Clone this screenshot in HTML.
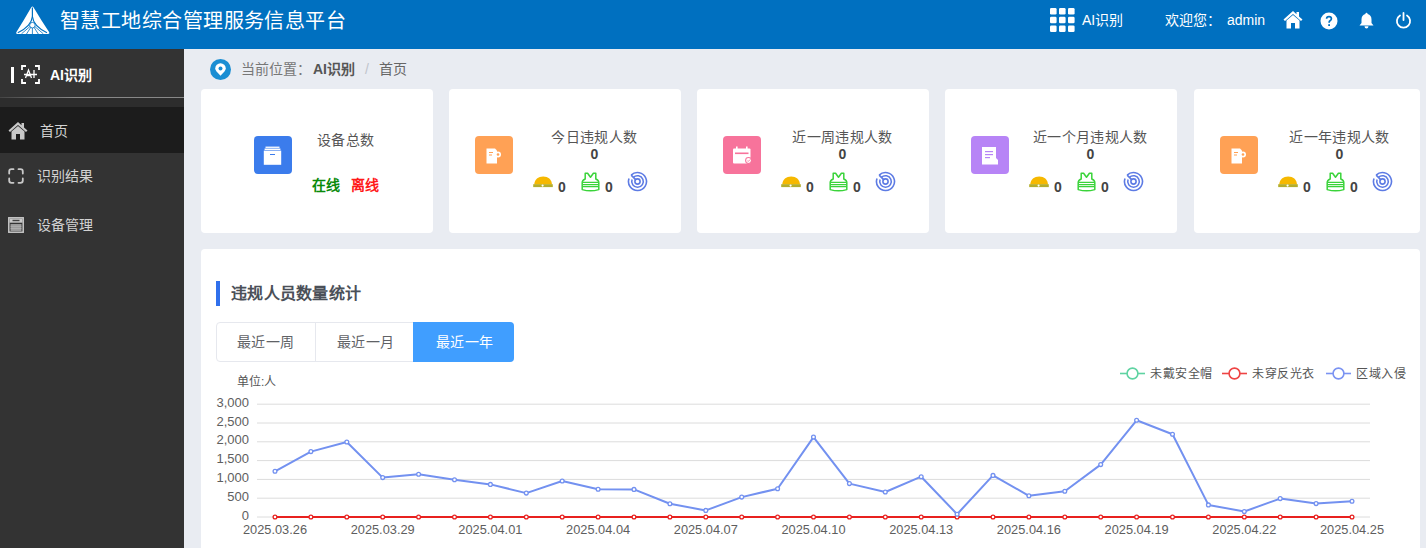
<!DOCTYPE html>
<html lang="zh-CN"><head><meta charset="utf-8">
<style>
*{margin:0;padding:0;box-sizing:border-box}
html,body{width:1426px;height:548px;overflow:hidden}
body{position:relative;background:#e9ecf2;font-family:"Liberation Sans",sans-serif;color:#606266}
.a{position:absolute;white-space:nowrap}
#hdr{left:0;top:0;width:1426px;height:49px;background:#0070c0}
#side{left:0;top:49px;width:184px;height:499px;background:#333333}
.card{position:absolute;top:89px;height:144px;background:#fff;border-radius:4px}
.ib{position:absolute;top:47px;width:38px;height:38px;border-radius:4px}
.ct{position:absolute;top:38px;font-size:14px;line-height:20px;color:#555;letter-spacing:0.3px}
.cz{position:absolute;top:56px;font-size:14px;line-height:16px;font-weight:bold;color:#444}
.cn{position:absolute;top:90px;font-size:14px;line-height:16px;font-weight:bold;color:#444}
</style></head><body>

<!-- header -->
<div id="hdr" class="a"></div>
<svg class="a" style="left:14px;top:4px" width="40" height="34" viewBox="14 4 40 34">
  <path d="M31.3 7.2 Q32.4 5.6 33.5 7.2 Q41 20 49.2 32.2 Q50 34 48 34 L17.5 34 Q15.5 34 16.3 32.2 Q24 20 31.3 7.2 Z" fill="#fff"/>
  <path d="M32.4 7.5 L32.4 16.5 Q31.5 26 17.8 32.8" fill="none" stroke="#0070c0" stroke-width="1.2"/>
  <path d="M32.4 16.5 Q33.3 26 47 32.8" fill="none" stroke="#0070c0" stroke-width="1.2"/>
  <circle cx="32.4" cy="25.2" r="2.8" fill="#fff" stroke="#0070c0" stroke-width="0.9"/>
  <path d="M32.4 28 L32.4 34 M30.6 27.6 L26.5 34 M34.2 27.6 L38.3 34 M29.9 26.6 L21.5 33.8 M34.9 26.6 L43.3 33.8" stroke="#0070c0" stroke-width="0.8"/>
</svg>
<div class="a" style="left:60px;top:8px;font-size:20px;line-height:26px;color:#fff;letter-spacing:0.45px;font-weight:500">智慧工地综合管理服务信息平台</div>

<svg class="a" style="left:1050px;top:8px" width="25" height="24" viewBox="0 0 25 24">
  <g fill="#fff">
  <rect x="0" y="0" width="6.6" height="6.6" rx="1.3"/><rect x="9" y="0" width="6.6" height="6.6" rx="1.3"/><rect x="18" y="0" width="6.6" height="6.6" rx="1.3"/>
  <rect x="0" y="8.7" width="6.6" height="6.6" rx="1.3"/><rect x="9" y="8.7" width="6.6" height="6.6" rx="1.3"/><rect x="18" y="8.7" width="6.6" height="6.6" rx="1.3"/>
  <rect x="0" y="17.4" width="6.6" height="6.6" rx="1.3"/><rect x="9" y="17.4" width="6.6" height="6.6" rx="1.3"/><rect x="18" y="17.4" width="6.6" height="6.6" rx="1.3"/>
  </g>
</svg>
<div class="a" style="left:1082px;top:11px;font-size:14px;line-height:18px;color:#fff">AI识别</div>
<div class="a" style="left:1165px;top:11px;font-size:14px;line-height:18px;color:#fff">欢迎您：</div>
<div class="a" style="left:1227px;top:11px;font-size:14px;line-height:18px;color:#fff">admin</div>
<!-- home -->
<svg class="a" style="left:1283px;top:10px" width="20" height="19" viewBox="0 0 20 19">
  <path d="M10 1 L0.5 9.5 L2 11 L10 4 L18 11 L19.5 9.5 L16 6.4 L16 2 L13.5 2 L13.5 4.2 Z" fill="#fff"/>
  <path d="M3.5 10.5 L10 5 L16.5 10.5 L16.5 18.5 L12 18.5 L12 13 L8 13 L8 18.5 L3.5 18.5 Z" fill="#fff"/>
</svg>
<!-- question -->
<svg class="a" style="left:1320px;top:12px" width="18" height="18" viewBox="0 0 18 18">
  <circle cx="9" cy="9" r="8.5" fill="#fff"/>
  <path d="M6.6 6.8 Q6.6 4.6 9 4.6 Q11.4 4.6 11.4 6.7 Q11.4 8 10 8.8 Q9.1 9.4 9.1 10.8" fill="none" stroke="#0070c0" stroke-width="1.7"/>
  <rect x="8.2" y="12.2" width="1.8" height="1.8" fill="#0070c0"/>
</svg>
<!-- bell -->
<svg class="a" style="left:1359px;top:12px" width="15" height="17" viewBox="0 0 15 17">
  <path d="M7.5 0.8 Q8.6 0.8 8.6 2 Q12.5 3 12.5 7.5 L12.5 11 L14.5 13.5 L0.5 13.5 L2.5 11 L2.5 7.5 Q2.5 3 6.4 2 Q6.4 0.8 7.5 0.8 Z" fill="#fff"/>
  <path d="M5.5 14.3 L9.5 14.3 Q9.3 16.5 7.5 16.5 Q5.7 16.5 5.5 14.3 Z" fill="#fff"/>
</svg>
<!-- power -->
<svg class="a" style="left:1395px;top:12px" width="17" height="17" viewBox="0 0 17 17">
  <path d="M5 3.5 A6.6 6.6 0 1 0 12 3.5" fill="none" stroke="#fff" stroke-width="1.8" stroke-linecap="round"/>
  <path d="M8.5 1 L8.5 8" stroke="#fff" stroke-width="1.8" stroke-linecap="round"/>
</svg>

<!-- sidebar -->
<div id="side" class="a"></div>
<div class="a" style="left:0;top:97px;width:184px;height:1px;background:linear-gradient(90deg,#444,#888 40%,#888)"></div>
<div class="a" style="left:0;top:98px;width:184px;height:9px;background:#2d2d2d"></div>
<div class="a" style="left:11px;top:67px;width:3px;height:16px;background:#fff"></div>
<svg class="a" style="left:21px;top:65px" width="19" height="19" viewBox="0 0 19 19">
  <path d="M1 5 L1 1 L5 1 M14 1 L18 1 L18 5 M18 14 L18 18 L14 18 M5 18 L1 18 L1 14" fill="none" stroke="#fff" stroke-width="1.8"/>
  <path d="M4.5 13 L7.5 5 L10.5 13 M5.6 10.5 L9.4 10.5 M13 5 L13 13 M3 9.5 L16 9.5" fill="none" stroke="#fff" stroke-width="1.3"/>
</svg>
<div class="a" style="left:50px;top:66px;font-size:14px;line-height:18px;color:#fff;font-weight:bold">AI识别</div>

<div class="a" style="left:0;top:107px;width:184px;height:46px;background:#1c1c1c"></div>
<svg class="a" style="left:8px;top:121px" width="20" height="19" viewBox="0 0 20 19">
  <path d="M10 1 L0.5 9.5 L2 11 L10 4 L18 11 L19.5 9.5 L16 6.4 L16 2 L13.5 2 L13.5 4.2 Z" fill="#c8c8c8"/>
  <path d="M3.5 10.5 L10 5 L16.5 10.5 L16.5 18.5 L12 18.5 L12 13 L8 13 L8 18.5 L3.5 18.5 Z" fill="#c8c8c8"/>
</svg>
<div class="a" style="left:40px;top:122px;font-size:14px;line-height:18px;color:#d2d2d2">首页</div>

<svg class="a" style="left:8px;top:168px" width="16" height="16" viewBox="0 0 16 16">
  <path d="M1.2 5.5 L1.2 3.5 Q1.2 1.2 3.5 1.2 L5.5 1.2 M10.5 1.2 L12.5 1.2 Q14.8 1.2 14.8 3.5 L14.8 5.5 M14.8 10.5 L14.8 12.5 Q14.8 14.8 12.5 14.8 L10.5 14.8 M5.5 14.8 L3.5 14.8 Q1.2 14.8 1.2 12.5 L1.2 10.5" fill="none" stroke="#c8c8c8" stroke-width="1.8" stroke-linecap="round"/>
</svg>
<div class="a" style="left:37px;top:167px;font-size:14px;line-height:18px;color:#d2d2d2">识别结果</div>

<svg class="a" style="left:8px;top:217px" width="16" height="16" viewBox="0 0 16 16">
  <rect x="0.8" y="0.8" width="14.4" height="14.4" fill="none" stroke="#c8c8c8" stroke-width="1.5"/>
  <rect x="1.5" y="1.5" width="13" height="4.2" fill="#c8c8c8"/>
  <rect x="4.5" y="2.8" width="7" height="1.4" fill="#444"/>
  <rect x="2.5" y="7" width="11" height="7" fill="#9a9a9a"/>
  <path d="M2.5 9.3 L13.5 9.3 M2.5 11.6 L13.5 11.6" stroke="#b8b8b8" stroke-width="0.7"/>
</svg>
<div class="a" style="left:37px;top:216px;font-size:14px;line-height:18px;color:#d2d2d2">设备管理</div>

<!-- breadcrumb -->
<svg class="a" style="left:210px;top:59px" width="21" height="21" viewBox="0 0 21 21">
  <circle cx="10.5" cy="10.5" r="10.5" fill="#1a8ed3"/>
  <path d="M10.5 16.8 Q5.2 11.8 5.2 9.6 A5.3 5.3 0 0 1 15.8 9.6 Q15.8 11.8 10.5 16.8 Z" fill="#fff"/>
  <circle cx="10.5" cy="9.4" r="2" fill="#1a8ed3"/>
</svg>
<div class="a" style="left:241px;top:60px;font-size:14px;line-height:18px;color:#777">当前位置：</div>
<div class="a" style="left:313px;top:60px;font-size:14px;line-height:18px;color:#555;font-weight:bold">AI识别</div>
<div class="a" style="left:365px;top:60px;font-size:14px;line-height:18px;color:#c0c4cc">/</div>
<div class="a" style="left:379px;top:60px;font-size:14px;line-height:18px;color:#666">首页</div>


<!-- cards -->
<div class="card" style="left:201px;width:232px"></div>
<div class="card" style="left:449px;width:232px"></div>
<div class="card" style="left:697px;width:232px"></div>
<div class="card" style="left:945px;width:232px"></div>
<div class="card" style="left:1194px;width:226px"></div>
<div class="ib" style="left:254px;top:136px;background:#3b7cec"></div>
<svg class="a" style="left:263px;top:145px" width="20" height="21" viewBox="0 0 20 21">
<rect x="2.5" y="1.6" width="14" height="1.3" fill="#fff"/>
<rect x="1.6" y="3.5" width="15.8" height="1.5" fill="#fff"/>
<rect x="0.8" y="5.6" width="17.4" height="14.2" fill="#fff"/>
<rect x="7" y="9" width="5" height="1" fill="#3b7cec"/>
</svg>
<div class="ct" style="left:317px;top:130px">设备总数</div>
<div class="a" style="left:312px;top:176px;font-size:14px;line-height:18px;font-weight:bold;color:#0a8a0a">在线</div>
<div class="a" style="left:351px;top:176px;font-size:14px;line-height:18px;font-weight:bold;color:#ff1a1a">离线</div>
<div class="ib" style="left:475px;top:136px;background:#ffa155"></div>
<svg class="a" style="left:475px;top:136px" width="38" height="38" viewBox="0 0 38 38">
<path d="M11.5 12.5 L20 12.5 L22 14.5 L22 27.5 L11.5 27.5 Z" fill="#fff"/>
<circle cx="23" cy="18.5" r="3" fill="#fff"/><circle cx="23" cy="18.5" r="1.3" fill="#ffa155"/>
<rect x="14" y="16" width="4" height="1" fill="#ffa155"/><rect x="14" y="18.5" width="3" height="1" fill="#ffa155"/>
</svg>
<div class="ct" style="left:534.4px;width:120px;text-align:center;top:127px">今日违规人数</div>
<div class="cz" style="left:574.4px;width:40px;text-align:center;top:146px">0</div>
<svg class="a" style="left:533px;top:176px" width="21" height="13" viewBox="0 0 21 13">
<path d="M1.2 8.6 C1.6 3.2 5.2 0.6 10.2 0.5 C15.2 0.6 18.6 3.2 19 8.6 Z" fill="#f6b800"/>
<rect x="0.2" y="8.2" width="19.6" height="2.9" fill="#b4ae2c"/>
<circle cx="9.6" cy="9.6" r="1.1" fill="#fff"/>
</svg>
<div class="cn" style="left:558px;top:179px">0</div>
<svg class="a" style="left:581px;top:172px" width="19" height="20" viewBox="0 0 19 20">
<path d="M4.2 1.2 L6.6 1.2 L9.5 5.2 L12.4 1.2 L14.8 1.2 L14.8 7 Q17.8 8.2 17.8 10.5 L17.8 17.6 Q9.5 20 1.2 17.6 L1.2 10.5 Q1.2 8.2 4.2 7 Z" fill="none" stroke="#3ad33a" stroke-width="1.5" stroke-linejoin="round"/>
<path d="M1.5 10.4 L17.5 10.4 M1.5 12.6 L17.5 12.6 M1.5 14.6 L17.5 14.6" stroke="#3ad33a" stroke-width="1.2"/>
</svg>
<div class="cn" style="left:605px;top:179px">0</div>
<svg class="a" style="left:627px;top:171px" width="21" height="21" viewBox="0 0 21 21">
<g fill="none" stroke="#5d7be4" stroke-width="1.6">
<path d="M4.14 4.14 A9 9 0 1 1 2.04 7.42"/>
<path d="M6.4 6.4 A5.8 5.8 0 1 1 5.05 8.52"/>
<circle cx="10.5" cy="10.5" r="2.6"/>
<path d="M4.14 4.14 L8.6 8.6"/>
</g></svg>
<div class="ib" style="left:723px;top:136px;background:#f7739b"></div>
<svg class="a" style="left:723px;top:136px" width="38" height="38" viewBox="0 0 38 38">
<rect x="10" y="12.5" width="17.5" height="15" rx="1" fill="#fff"/>
<rect x="13" y="10.5" width="1.6" height="3" fill="#fff"/><rect x="23" y="10.5" width="1.6" height="3" fill="#fff"/>
<rect x="12" y="16.5" width="13.5" height="1.6" fill="#f7739b"/>
<circle cx="25.5" cy="24.5" r="3.4" fill="#f7739b"/><circle cx="25.5" cy="24.5" r="2.4" fill="#fff"/>
<path d="M24.2 24.5 L25.2 25.5 L27 23.6" stroke="#f7739b" stroke-width="0.9" fill="none"/>
</svg>
<div class="ct" style="left:782.4px;width:120px;text-align:center;top:127px">近一周违规人数</div>
<div class="cz" style="left:822.4px;width:40px;text-align:center;top:146px">0</div>
<svg class="a" style="left:781px;top:176px" width="21" height="13" viewBox="0 0 21 13">
<path d="M1.2 8.6 C1.6 3.2 5.2 0.6 10.2 0.5 C15.2 0.6 18.6 3.2 19 8.6 Z" fill="#f6b800"/>
<rect x="0.2" y="8.2" width="19.6" height="2.9" fill="#b4ae2c"/>
<circle cx="9.6" cy="9.6" r="1.1" fill="#fff"/>
</svg>
<div class="cn" style="left:806px;top:179px">0</div>
<svg class="a" style="left:829px;top:172px" width="19" height="20" viewBox="0 0 19 20">
<path d="M4.2 1.2 L6.6 1.2 L9.5 5.2 L12.4 1.2 L14.8 1.2 L14.8 7 Q17.8 8.2 17.8 10.5 L17.8 17.6 Q9.5 20 1.2 17.6 L1.2 10.5 Q1.2 8.2 4.2 7 Z" fill="none" stroke="#3ad33a" stroke-width="1.5" stroke-linejoin="round"/>
<path d="M1.5 10.4 L17.5 10.4 M1.5 12.6 L17.5 12.6 M1.5 14.6 L17.5 14.6" stroke="#3ad33a" stroke-width="1.2"/>
</svg>
<div class="cn" style="left:853px;top:179px">0</div>
<svg class="a" style="left:875px;top:171px" width="21" height="21" viewBox="0 0 21 21">
<g fill="none" stroke="#5d7be4" stroke-width="1.6">
<path d="M4.14 4.14 A9 9 0 1 1 2.04 7.42"/>
<path d="M6.4 6.4 A5.8 5.8 0 1 1 5.05 8.52"/>
<circle cx="10.5" cy="10.5" r="2.6"/>
<path d="M4.14 4.14 L8.6 8.6"/>
</g></svg>
<div class="ib" style="left:971px;top:136px;background:#b784f6"></div>
<svg class="a" style="left:971px;top:136px" width="38" height="38" viewBox="0 0 38 38">
<path d="M11 11 L25 11 L25 22 L27 24 L27 28.5 L11 28.5 Z" fill="#fff"/>
<rect x="14" y="15" width="8" height="1.2" fill="#b784f6"/><rect x="14" y="18" width="8" height="1.2" fill="#b784f6"/><rect x="14" y="21" width="5" height="1.2" fill="#b784f6"/>
</svg>
<div class="ct" style="left:1030.4px;width:120px;text-align:center;top:127px">近一个月违规人数</div>
<div class="cz" style="left:1070.4px;width:40px;text-align:center;top:146px">0</div>
<svg class="a" style="left:1029px;top:176px" width="21" height="13" viewBox="0 0 21 13">
<path d="M1.2 8.6 C1.6 3.2 5.2 0.6 10.2 0.5 C15.2 0.6 18.6 3.2 19 8.6 Z" fill="#f6b800"/>
<rect x="0.2" y="8.2" width="19.6" height="2.9" fill="#b4ae2c"/>
<circle cx="9.6" cy="9.6" r="1.1" fill="#fff"/>
</svg>
<div class="cn" style="left:1054px;top:179px">0</div>
<svg class="a" style="left:1077px;top:172px" width="19" height="20" viewBox="0 0 19 20">
<path d="M4.2 1.2 L6.6 1.2 L9.5 5.2 L12.4 1.2 L14.8 1.2 L14.8 7 Q17.8 8.2 17.8 10.5 L17.8 17.6 Q9.5 20 1.2 17.6 L1.2 10.5 Q1.2 8.2 4.2 7 Z" fill="none" stroke="#3ad33a" stroke-width="1.5" stroke-linejoin="round"/>
<path d="M1.5 10.4 L17.5 10.4 M1.5 12.6 L17.5 12.6 M1.5 14.6 L17.5 14.6" stroke="#3ad33a" stroke-width="1.2"/>
</svg>
<div class="cn" style="left:1101px;top:179px">0</div>
<svg class="a" style="left:1123px;top:171px" width="21" height="21" viewBox="0 0 21 21">
<g fill="none" stroke="#5d7be4" stroke-width="1.6">
<path d="M4.14 4.14 A9 9 0 1 1 2.04 7.42"/>
<path d="M6.4 6.4 A5.8 5.8 0 1 1 5.05 8.52"/>
<circle cx="10.5" cy="10.5" r="2.6"/>
<path d="M4.14 4.14 L8.6 8.6"/>
</g></svg>
<div class="ib" style="left:1220px;top:136px;background:#ffa155"></div>
<svg class="a" style="left:1220px;top:136px" width="38" height="38" viewBox="0 0 38 38">
<path d="M11.5 12.5 L20 12.5 L22 14.5 L22 27.5 L11.5 27.5 Z" fill="#fff"/>
<circle cx="23" cy="18.5" r="3" fill="#fff"/><circle cx="23" cy="18.5" r="1.3" fill="#ffa155"/>
<rect x="14" y="16" width="4" height="1" fill="#ffa155"/><rect x="14" y="18.5" width="3" height="1" fill="#ffa155"/>
</svg>
<div class="ct" style="left:1279.4px;width:120px;text-align:center;top:127px">近一年违规人数</div>
<div class="cz" style="left:1319.4px;width:40px;text-align:center;top:146px">0</div>
<svg class="a" style="left:1278px;top:176px" width="21" height="13" viewBox="0 0 21 13">
<path d="M1.2 8.6 C1.6 3.2 5.2 0.6 10.2 0.5 C15.2 0.6 18.6 3.2 19 8.6 Z" fill="#f6b800"/>
<rect x="0.2" y="8.2" width="19.6" height="2.9" fill="#b4ae2c"/>
<circle cx="9.6" cy="9.6" r="1.1" fill="#fff"/>
</svg>
<div class="cn" style="left:1303px;top:179px">0</div>
<svg class="a" style="left:1326px;top:172px" width="19" height="20" viewBox="0 0 19 20">
<path d="M4.2 1.2 L6.6 1.2 L9.5 5.2 L12.4 1.2 L14.8 1.2 L14.8 7 Q17.8 8.2 17.8 10.5 L17.8 17.6 Q9.5 20 1.2 17.6 L1.2 10.5 Q1.2 8.2 4.2 7 Z" fill="none" stroke="#3ad33a" stroke-width="1.5" stroke-linejoin="round"/>
<path d="M1.5 10.4 L17.5 10.4 M1.5 12.6 L17.5 12.6 M1.5 14.6 L17.5 14.6" stroke="#3ad33a" stroke-width="1.2"/>
</svg>
<div class="cn" style="left:1350px;top:179px">0</div>
<svg class="a" style="left:1372px;top:171px" width="21" height="21" viewBox="0 0 21 21">
<g fill="none" stroke="#5d7be4" stroke-width="1.6">
<path d="M4.14 4.14 A9 9 0 1 1 2.04 7.42"/>
<path d="M6.4 6.4 A5.8 5.8 0 1 1 5.05 8.52"/>
<circle cx="10.5" cy="10.5" r="2.6"/>
<path d="M4.14 4.14 L8.6 8.6"/>
</g></svg>
<!-- chart panel -->
<div class="a" style="left:201px;top:249px;width:1219px;height:299px;background:#fff;border-radius:4px 4px 0 0"></div>
<div class="a" style="left:216px;top:281px;width:4px;height:25px;background:#3070ec"></div>
<div class="a" style="left:231px;top:283px;font-size:16px;line-height:22px;font-weight:bold;color:#4b5058;letter-spacing:0.3px">违规人员数量统计</div>
<div class="a" style="left:216px;top:322px;width:298px;height:40px;border:1px solid #e6e8ee;border-radius:4px"></div>
<div class="a" style="left:315px;top:323px;width:1px;height:38px;background:#e6e8ee"></div>
<div class="a" style="left:413px;top:322px;width:101px;height:40px;background:#409eff;border-radius:0 4px 4px 0"></div>
<div class="a" style="left:237px;top:332px;font-size:14px;line-height:20px;color:#606266;letter-spacing:0.4px">最近一周</div>
<div class="a" style="left:337px;top:332px;font-size:14px;line-height:20px;color:#606266;letter-spacing:0.4px">最近一月</div>
<div class="a" style="left:436px;top:332px;font-size:14px;line-height:20px;color:#fff;letter-spacing:0.4px">最近一年</div>
<div class="a" style="left:237px;top:374px;font-size:12px;line-height:16px;color:#555">单位:人</div>
<svg class="a" style="left:0;top:0" width="1426" height="548" viewBox="0 0 1426 548">
<line x1="257" y1="517.0" x2="1370" y2="517.0" stroke="#dcdcdc" stroke-width="1"/>
<line x1="257" y1="498.2" x2="1370" y2="498.2" stroke="#dcdcdc" stroke-width="1"/>
<line x1="257" y1="479.4" x2="1370" y2="479.4" stroke="#dcdcdc" stroke-width="1"/>
<line x1="257" y1="460.6" x2="1370" y2="460.6" stroke="#dcdcdc" stroke-width="1"/>
<line x1="257" y1="441.8" x2="1370" y2="441.8" stroke="#dcdcdc" stroke-width="1"/>
<line x1="257" y1="423.0" x2="1370" y2="423.0" stroke="#dcdcdc" stroke-width="1"/>
<line x1="257" y1="404.2" x2="1370" y2="404.2" stroke="#dcdcdc" stroke-width="1"/>
<text x="249" y="519.6" text-anchor="end" font-size="13" fill="#5e5e5e" font-family="Liberation Sans">0</text>
<text x="249" y="500.8" text-anchor="end" font-size="13" fill="#5e5e5e" font-family="Liberation Sans">500</text>
<text x="249" y="482.0" text-anchor="end" font-size="13" fill="#5e5e5e" font-family="Liberation Sans">1,000</text>
<text x="249" y="463.2" text-anchor="end" font-size="13" fill="#5e5e5e" font-family="Liberation Sans">1,500</text>
<text x="249" y="444.4" text-anchor="end" font-size="13" fill="#5e5e5e" font-family="Liberation Sans">2,000</text>
<text x="249" y="425.6" text-anchor="end" font-size="13" fill="#5e5e5e" font-family="Liberation Sans">2,500</text>
<text x="249" y="406.8" text-anchor="end" font-size="13" fill="#5e5e5e" font-family="Liberation Sans">3,000</text>
<text x="275.0" y="534" text-anchor="middle" font-size="12.8" fill="#5e5e5e" font-family="Liberation Sans">2025.03.26</text>
<text x="382.7" y="534" text-anchor="middle" font-size="12.8" fill="#5e5e5e" font-family="Liberation Sans">2025.03.29</text>
<text x="490.4" y="534" text-anchor="middle" font-size="12.8" fill="#5e5e5e" font-family="Liberation Sans">2025.04.01</text>
<text x="598.1" y="534" text-anchor="middle" font-size="12.8" fill="#5e5e5e" font-family="Liberation Sans">2025.04.04</text>
<text x="705.8" y="534" text-anchor="middle" font-size="12.8" fill="#5e5e5e" font-family="Liberation Sans">2025.04.07</text>
<text x="813.5" y="534" text-anchor="middle" font-size="12.8" fill="#5e5e5e" font-family="Liberation Sans">2025.04.10</text>
<text x="921.2" y="534" text-anchor="middle" font-size="12.8" fill="#5e5e5e" font-family="Liberation Sans">2025.04.13</text>
<text x="1028.9" y="534" text-anchor="middle" font-size="12.8" fill="#5e5e5e" font-family="Liberation Sans">2025.04.16</text>
<text x="1136.6" y="534" text-anchor="middle" font-size="12.8" fill="#5e5e5e" font-family="Liberation Sans">2025.04.19</text>
<text x="1244.3" y="534" text-anchor="middle" font-size="12.8" fill="#5e5e5e" font-family="Liberation Sans">2025.04.22</text>
<text x="1352.0" y="534" text-anchor="middle" font-size="12.8" fill="#5e5e5e" font-family="Liberation Sans">2025.04.25</text>
<polyline points="275.0,471.3 310.9,451.6 346.8,442.0 382.7,477.6 418.6,474.3 454.5,479.8 490.4,484.4 526.3,493.1 562.2,481.0 598.1,489.2 634.0,489.4 669.9,503.8 705.8,510.4 741.7,497.1 777.6,488.7 813.5,437.1 849.4,483.6 885.3,492.0 921.2,476.7 957.1,514.2 993.0,475.4 1028.9,495.8 1064.8,491.3 1100.7,464.6 1136.6,420.3 1172.5,434.3 1208.4,504.9 1244.3,511.5 1280.2,498.6 1316.1,503.6 1352.0,501.3" fill="none" stroke="#7391f0" stroke-width="2" stroke-linejoin="round"/>
<line x1="275.0" y1="517" x2="1352.0" y2="517" stroke="#e8211f" stroke-width="2"/>
<circle cx="275.0" cy="517" r="1.9" fill="#fff" stroke="#e8211f" stroke-width="1.3"/>
<circle cx="310.9" cy="517" r="1.9" fill="#fff" stroke="#e8211f" stroke-width="1.3"/>
<circle cx="346.8" cy="517" r="1.9" fill="#fff" stroke="#e8211f" stroke-width="1.3"/>
<circle cx="382.7" cy="517" r="1.9" fill="#fff" stroke="#e8211f" stroke-width="1.3"/>
<circle cx="418.6" cy="517" r="1.9" fill="#fff" stroke="#e8211f" stroke-width="1.3"/>
<circle cx="454.5" cy="517" r="1.9" fill="#fff" stroke="#e8211f" stroke-width="1.3"/>
<circle cx="490.4" cy="517" r="1.9" fill="#fff" stroke="#e8211f" stroke-width="1.3"/>
<circle cx="526.3" cy="517" r="1.9" fill="#fff" stroke="#e8211f" stroke-width="1.3"/>
<circle cx="562.2" cy="517" r="1.9" fill="#fff" stroke="#e8211f" stroke-width="1.3"/>
<circle cx="598.1" cy="517" r="1.9" fill="#fff" stroke="#e8211f" stroke-width="1.3"/>
<circle cx="634.0" cy="517" r="1.9" fill="#fff" stroke="#e8211f" stroke-width="1.3"/>
<circle cx="669.9" cy="517" r="1.9" fill="#fff" stroke="#e8211f" stroke-width="1.3"/>
<circle cx="705.8" cy="517" r="1.9" fill="#fff" stroke="#e8211f" stroke-width="1.3"/>
<circle cx="741.7" cy="517" r="1.9" fill="#fff" stroke="#e8211f" stroke-width="1.3"/>
<circle cx="777.6" cy="517" r="1.9" fill="#fff" stroke="#e8211f" stroke-width="1.3"/>
<circle cx="813.5" cy="517" r="1.9" fill="#fff" stroke="#e8211f" stroke-width="1.3"/>
<circle cx="849.4" cy="517" r="1.9" fill="#fff" stroke="#e8211f" stroke-width="1.3"/>
<circle cx="885.3" cy="517" r="1.9" fill="#fff" stroke="#e8211f" stroke-width="1.3"/>
<circle cx="921.2" cy="517" r="1.9" fill="#fff" stroke="#e8211f" stroke-width="1.3"/>
<circle cx="957.1" cy="517" r="1.9" fill="#fff" stroke="#e8211f" stroke-width="1.3"/>
<circle cx="993.0" cy="517" r="1.9" fill="#fff" stroke="#e8211f" stroke-width="1.3"/>
<circle cx="1028.9" cy="517" r="1.9" fill="#fff" stroke="#e8211f" stroke-width="1.3"/>
<circle cx="1064.8" cy="517" r="1.9" fill="#fff" stroke="#e8211f" stroke-width="1.3"/>
<circle cx="1100.7" cy="517" r="1.9" fill="#fff" stroke="#e8211f" stroke-width="1.3"/>
<circle cx="1136.6" cy="517" r="1.9" fill="#fff" stroke="#e8211f" stroke-width="1.3"/>
<circle cx="1172.5" cy="517" r="1.9" fill="#fff" stroke="#e8211f" stroke-width="1.3"/>
<circle cx="1208.4" cy="517" r="1.9" fill="#fff" stroke="#e8211f" stroke-width="1.3"/>
<circle cx="1244.3" cy="517" r="1.9" fill="#fff" stroke="#e8211f" stroke-width="1.3"/>
<circle cx="1280.2" cy="517" r="1.9" fill="#fff" stroke="#e8211f" stroke-width="1.3"/>
<circle cx="1316.1" cy="517" r="1.9" fill="#fff" stroke="#e8211f" stroke-width="1.3"/>
<circle cx="1352.0" cy="517" r="1.9" fill="#fff" stroke="#e8211f" stroke-width="1.3"/>
<circle cx="275.0" cy="471.3" r="1.9" fill="#fff" stroke="#7391f0" stroke-width="1.3"/>
<circle cx="310.9" cy="451.6" r="1.9" fill="#fff" stroke="#7391f0" stroke-width="1.3"/>
<circle cx="346.8" cy="442.0" r="1.9" fill="#fff" stroke="#7391f0" stroke-width="1.3"/>
<circle cx="382.7" cy="477.6" r="1.9" fill="#fff" stroke="#7391f0" stroke-width="1.3"/>
<circle cx="418.6" cy="474.3" r="1.9" fill="#fff" stroke="#7391f0" stroke-width="1.3"/>
<circle cx="454.5" cy="479.8" r="1.9" fill="#fff" stroke="#7391f0" stroke-width="1.3"/>
<circle cx="490.4" cy="484.4" r="1.9" fill="#fff" stroke="#7391f0" stroke-width="1.3"/>
<circle cx="526.3" cy="493.1" r="1.9" fill="#fff" stroke="#7391f0" stroke-width="1.3"/>
<circle cx="562.2" cy="481.0" r="1.9" fill="#fff" stroke="#7391f0" stroke-width="1.3"/>
<circle cx="598.1" cy="489.2" r="1.9" fill="#fff" stroke="#7391f0" stroke-width="1.3"/>
<circle cx="634.0" cy="489.4" r="1.9" fill="#fff" stroke="#7391f0" stroke-width="1.3"/>
<circle cx="669.9" cy="503.8" r="1.9" fill="#fff" stroke="#7391f0" stroke-width="1.3"/>
<circle cx="705.8" cy="510.4" r="1.9" fill="#fff" stroke="#7391f0" stroke-width="1.3"/>
<circle cx="741.7" cy="497.1" r="1.9" fill="#fff" stroke="#7391f0" stroke-width="1.3"/>
<circle cx="777.6" cy="488.7" r="1.9" fill="#fff" stroke="#7391f0" stroke-width="1.3"/>
<circle cx="813.5" cy="437.1" r="1.9" fill="#fff" stroke="#7391f0" stroke-width="1.3"/>
<circle cx="849.4" cy="483.6" r="1.9" fill="#fff" stroke="#7391f0" stroke-width="1.3"/>
<circle cx="885.3" cy="492.0" r="1.9" fill="#fff" stroke="#7391f0" stroke-width="1.3"/>
<circle cx="921.2" cy="476.7" r="1.9" fill="#fff" stroke="#7391f0" stroke-width="1.3"/>
<circle cx="957.1" cy="514.2" r="1.9" fill="#fff" stroke="#7391f0" stroke-width="1.3"/>
<circle cx="993.0" cy="475.4" r="1.9" fill="#fff" stroke="#7391f0" stroke-width="1.3"/>
<circle cx="1028.9" cy="495.8" r="1.9" fill="#fff" stroke="#7391f0" stroke-width="1.3"/>
<circle cx="1064.8" cy="491.3" r="1.9" fill="#fff" stroke="#7391f0" stroke-width="1.3"/>
<circle cx="1100.7" cy="464.6" r="1.9" fill="#fff" stroke="#7391f0" stroke-width="1.3"/>
<circle cx="1136.6" cy="420.3" r="1.9" fill="#fff" stroke="#7391f0" stroke-width="1.3"/>
<circle cx="1172.5" cy="434.3" r="1.9" fill="#fff" stroke="#7391f0" stroke-width="1.3"/>
<circle cx="1208.4" cy="504.9" r="1.9" fill="#fff" stroke="#7391f0" stroke-width="1.3"/>
<circle cx="1244.3" cy="511.5" r="1.9" fill="#fff" stroke="#7391f0" stroke-width="1.3"/>
<circle cx="1280.2" cy="498.6" r="1.9" fill="#fff" stroke="#7391f0" stroke-width="1.3"/>
<circle cx="1316.1" cy="503.6" r="1.9" fill="#fff" stroke="#7391f0" stroke-width="1.3"/>
<circle cx="1352.0" cy="501.3" r="1.9" fill="#fff" stroke="#7391f0" stroke-width="1.3"/>
<line x1="1120" y1="373.5" x2="1145" y2="373.5" stroke="#5fd3a2" stroke-width="1.6"/>
<circle cx="1132.5" cy="373.5" r="5.4" fill="#fff" stroke="#5fd3a2" stroke-width="1.6"/>
<text x="1150" y="378" font-size="12" fill="#555" letter-spacing="0.55" font-family="Liberation Sans">未戴安全帽</text>
<line x1="1222" y1="373.5" x2="1247" y2="373.5" stroke="#ee4444" stroke-width="1.6"/>
<circle cx="1234.5" cy="373.5" r="5.4" fill="#fff" stroke="#ee4444" stroke-width="1.6"/>
<text x="1252" y="378" font-size="12" fill="#555" letter-spacing="0.55" font-family="Liberation Sans">未穿反光衣</text>
<line x1="1326" y1="373.5" x2="1351" y2="373.5" stroke="#7b93f2" stroke-width="1.6"/>
<circle cx="1338.5" cy="373.5" r="5.4" fill="#fff" stroke="#7b93f2" stroke-width="1.6"/>
<text x="1356" y="378" font-size="12" fill="#555" letter-spacing="0.55" font-family="Liberation Sans">区域入侵</text>
</svg>
</body></html>
